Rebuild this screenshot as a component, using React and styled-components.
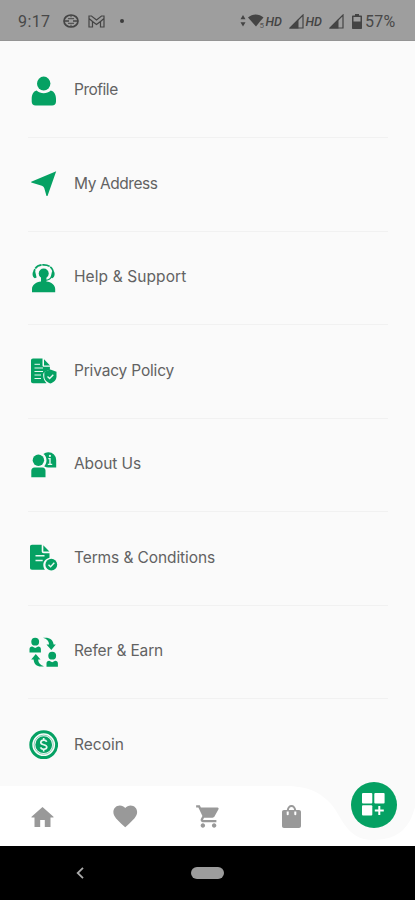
import styled, { createGlobalStyle } from "styled-components";
import { MdFavorite, MdShoppingCart } from "react-icons/md";

const GlobalStyle = createGlobalStyle`
    * {
        box-sizing: border-box;
    }

    body {
        margin: 0;
        background-color: #fafafa;
        font-family: Inter, "Liberation Sans", sans-serif;
    }
`;

const ProfileIcon = () => (
    <MenuIcon viewBox="0 0 30 30">
        <ellipse cx="15.7" cy="7.6" rx="6.7" ry="7" />
        <path d="M8.6 14.5c4 3.6 10.2 3.6 14.2 0 3.4.8 5.2 4.2 5.2 8.5v2.500c0 2.700-1.500 4-4 4H7.700c-2.500 0-4-1.300-4-4V23c0-4.300 1.500-7.700 4.900-8.500Z" />
    </MenuIcon>
);

const AddressIcon = () => (
    <MenuIcon viewBox="0 0 30 30">
        <path d="M28.2 2.200 19.500 27h-1l-2.200-7.800c-.3-1.200-1.200-2.100-2.400-2.500L3.200 13.600v-.9Z" />
    </MenuIcon>
);

const SupportIcon = () => (
    <MenuIcon viewBox="0 0 30 30">
        <path className="line" d="M6.800 13.500C4.200 6.600 8.700 1.800 15.600 1.800s11.400 4.800 8.800 11.700" strokeWidth="1.700" strokeDasharray="7.500 .7" />
        <circle cx="15.700" cy="10.500" r="5" />
        <path className="line" d="M23.500 13.500c-.8 2.300-3 3.600-6.500 3.900" strokeWidth="1.100" />
        <path d="M5.200 8.500h2l1.400 6-1.700.8c-2.500-1.300-2.900-4.700-1.700-6.800ZM26 8.500h-2l-1.400 6 1.700.8c2.500-1.300 2.900-4.700 1.700-6.800Z" />
        <path d="M13 14h5.400v4.500c5 .6 8.800 3.300 8.800 7.500v3.200H4V26c0-4.200 4-6.900 9-7.500Z" />
    </MenuIcon>
);

const PrivacyIcon = () => (
    <MenuIcon viewBox="0 0 30 30">
        <path d="M5 2.500h9.500v6.700c0 1 .6 1.600 1.600 1.600h5.800v3.300c-4 1.100-6.700 1.500-6.700 5.500 0 3.400 1.300 5.700 3.300 7.600H5c-1.200 0-2-.8-2-2V4.500c0-1.200.8-2 2-2Z" />
        <path d="M16 3.200 22 9.400h-6Z" />
        <path className="cut" d="M6.500 8.300H12M6.500 12H15M6.500 15.500H15M6.500 19H13M6.500 22.500h6.500" strokeWidth="1" />
        <path d="m22.400 13.600 6.100 2.200v4.500c0 3.600-2.300 5.900-6.100 7.300-3.800-1.400-6.100-3.700-6.100-7.300v-4.500Z" />
        <path className="cut" d="m19.500 20.500 2.100 2 3.700-3.700" strokeWidth="1.400" />
    </MenuIcon>
);

const AboutIcon = () => (
    <MenuIcon viewBox="0 0 30 30">
        <path d="M20.500 2.300a7.700 7.700 0 0 1 7.700 7.700v7.600h-7.700a7.600 7.600 0 0 1-4.300-1.300c1.500-1.600 2.300-3.500 2.300-6 0-2.900-1.300-5-3.100-6.300a7.500 7.500 0 0 1 5.100-1.700Z" />
        <circle cx="10.400" cy="10.200" r="5.700" />
        <path d="M6.500 17.500h7.900c2 0 3.100 1.300 3.100 3.300v6.500H3.300v-6.500c0-2 1.200-3.300 3.200-3.300Z" />
        <circle className="paper" cx="21.900" cy="5.900" r="1.100" />
        <path className="cut" d="M20.300 8.600H22v5.600M19.800 14.400h4.400" strokeWidth="1.400" />
    </MenuIcon>
);

const TermsIcon = () => (
    <MenuIcon viewBox="0 0 30 30">
        <path d="M4 1.800h9.700v6.500c0 1.200.8 2 2 2h5.800v4.500c-3.500.8-6.200 3.500-6.200 7.300 0 1.800.6 3.400 1.600 4.700H4c-1.300 0-2-.8-2-2v-21c0-1.200.7-2 2-2Z" />
        <path d="M15.300 2.300 21.400 8.600h-6.100Z" />
        <path className="cut" d="M7.500 12.800h9M7.500 17.600h7.200" strokeWidth="1.500" />
        <circle cx="23.300" cy="21.700" r="5.900" />
        <path className="cut" d="m20.500 21.700 2.100 2.100 3.700-4" strokeWidth="1.400" />
    </MenuIcon>
);

const ReferIcon = () => (
    <MenuIcon viewBox="0 0 30 30">
        <circle cx="7.200" cy="4.700" r="3.900" />
        <path d="M1.500 15.400v-3.200c0-1.700 1-2.700 2.700-2.700l3 1.500 3-1.500c1.700 0 2.700 1 2.700 2.700v3.200Z" />
        <circle cx="24.200" cy="18.700" r="3.900" />
        <path d="M18.500 29.700v-3.200c0-1.700 1-2.700 2.700-2.700l3 1.500 3-1.500c1.700 0 2.700 1 2.700 2.700v3.200Z" />
        <path d="M15 .8c6.300-.8 10.200 1.600 10.600 6.700h2.200l-4.500 5.500-4.800-5.500h2.600C20.800 4 19 1.900 15 .8Z" />
        <path d="M16 29.200c-6.200 1.200-10-1.300-10.400-6.700H3.200l4.600-5.600 4.700 5.600h-2.400c.3 3.600 2.200 5.600 5.900 6.700Z" />
    </MenuIcon>
);

const CoinIcon = () => (
    <MenuIcon viewBox="0 0 30 30">
        <circle className="line" cx="15.700" cy="14.700" r="12.900" strokeWidth="3" />
        <circle className="line" cx="15.700" cy="14.700" r="9.600" strokeWidth="1" opacity=".45" />
        <circle cx="15.700" cy="14.700" r="8.400" />
        <path className="cut" d="M18.700 11.900c-.5-1.200-1.500-1.700-3-1.700-1.700 0-2.900.8-2.900 2.200 0 3.100 6 1.500 6 4.700 0 1.400-1.200 2.200-3.100 2.200-1.600 0-2.700-.6-3.200-1.900M15.700 7.900v2.300m0 9.100v2.200" strokeWidth="1.700" />
    </MenuIcon>
);

const Signal = () => (
    <svg width="15" height="15" viewBox="0 0 15 15">
        <path d="M1 14 14 1v13Z" fill="none" stroke="#444" strokeWidth="1.200" />
        <path d="M.5 14.500 9.500 5v9.500Z" fill="#444" />
    </svg>
);

const items = [
    { label: "Profile", icon: ProfileIcon, spacing: -0.48 },
    { label: "My Address", icon: AddressIcon, spacing: -0.42 },
    { label: "Help & Support", icon: SupportIcon, spacing: 0.1 },
    { label: "Privacy Policy", icon: PrivacyIcon, spacing: -0.18 },
    { label: "About Us", icon: AboutIcon, spacing: -0.08 },
    { label: "Terms & Conditions", icon: TermsIcon, spacing: -0.1 },
    { label: "Refer & Earn", icon: ReferIcon, spacing: -0.15 },
    { label: "Recoin", icon: CoinIcon, spacing: 0.02 },
];

const App = () => {
    return (
        <>
            <GlobalStyle />
            <Screen>
                <StatusBar>
                    <StatusGroup>
                        <StatusText $width={32} $spacing={0.4}>9:17</StatusText>
                        <StatusSlot $left={13}>
                            <svg width="16" height="14" viewBox="0 0 16 14" fill="none" stroke="#444">
                                <ellipse cx="8" cy="7" rx="7" ry="6" strokeWidth="1.700" />
                                <path d="M1.500 7H6M10 7h4.500" strokeWidth="1.600" />
                                <path d="M8 1v2.300M8 10.700V13M5 4.700h6M5 9.300h6" strokeWidth="1" />
                            </svg>
                        </StatusSlot>
                        <StatusSlot $left={9}>
                            <svg width="17" height="13" viewBox="0 0 17 13" fill="none" stroke="#444" strokeWidth="1.200">
                                <path d="M1 1h2.500l5 4 5-4H16v11h-3.500V6.500l-4 3-4-3V12H1ZM4.500 6.500 1 3.500M12.500 6.500l3.500-3" />
                            </svg>
                        </StatusSlot>
                        <StatusSlot $left={14.5}>
                            <StatusDot />
                        </StatusSlot>
                    </StatusGroup>
                    <StatusGroup>
                        <svg width="6" height="12" viewBox="0 0 6 12" fill="#444">
                            <path d="m3 0 2.500 4.300h-5ZM3 11.500.5 7.200h5Z" />
                        </svg>
                        <StatusSlot $left={2}>
                            <svg width="18" height="14" viewBox="0 0 18 14">
                                <path d="M0 3.500C4.500-.5 11-.5 15.500 3.500L12 7.500 8 12.500Z" fill="#444" />
                                <text x="11.500" y="13.500" fontSize="8" fill="#555" fontFamily="Roboto, sans-serif">5</text>
                            </svg>
                        </StatusSlot>
                        <HdText>HD</HdText>
                        <StatusSlot $left={5}><Signal /></StatusSlot>
                        <StatusSlot $left={2}><HdText>HD</HdText></StatusSlot>
                        <StatusSlot $left={5}><Signal /></StatusSlot>
                        <StatusSlot $left={8}>
                            <svg width="10" height="15" viewBox="0 0 10 15">
                                <path d="M3 0h4v1.500h2c.6 0 1 .4 1 1V14c0 .6-.4 1-1 1H1c-.6 0-1-.4-1-1V2.500c0-.6.4-1 1-1h2ZM1.500 3v4.500h7V3Z" fill="#444" fillRule="evenodd" />
                            </svg>
                        </StatusSlot>
                        <StatusSlot $left={3.5}>
                            <StatusText $width={31} $spacing={0.2}>57%</StatusText>
                        </StatusSlot>
                    </StatusGroup>
                </StatusBar>

                <Menu>
                    {items.map(({ label, icon: Icon, spacing }) => (
                        <MenuItem key={label}>
                            <Icon />
                            <MenuLabel $spacing={spacing}>{label}</MenuLabel>
                        </MenuItem>
                    ))}
                </Menu>

                <TabBar>
                    <TabShape viewBox="0 0 415 60">
                        <path d="M0 0H285C308 0 320 6 331 18S346 54 373 54 410 40 415 21V60H0Z" fill="#fff" />
                    </TabShape>
                    <Tab>
                        <svg width="23" height="20" viewBox="0 0 23 20">
                            <path d="m11.500 0 11 9.800v.8h-3V20h-5.700v-7H9.200v7H3.500v-9.400h-3v-.8Z" />
                        </svg>
                    </Tab>
                    <Tab>
                        <MdFavorite size={28.5} />
                    </Tab>
                    <Tab>
                        <MdShoppingCart size={27} />
                    </Tab>
                    <Tab>
                        <svg width="19" height="23" viewBox="0 0 19 23">
                            <path d="M2 5h2.800C5.300 2 7 0 9.500 0s4.200 2 4.700 5H17c1.200 0 2 .8 2 2v14c0 1.200-.8 2-2 2H2c-1.200 0-2-.8-2-2V7c0-1.200.8-2 2-2Zm4.800 0h5.400C11.800 3 11 1.900 9.500 1.900S7.200 3 6.800 5ZM4.700 6.500v2.800a1 1 0 0 0 2 0V6.500Zm7.600 0v2.800a1 1 0 0 0 2 0V6.500Z" fillRule="evenodd" />
                        </svg>
                    </Tab>
                    <Tab $top>
                        <AddButton aria-label="Categories">
                            <svg width="23" height="23" viewBox="0 0 23 23" fill="#fff">
                                <rect x="0" y="0" width="10.300" height="10.500" rx="1" />
                                <rect x="12.300" y="0" width="10.300" height="10.500" rx="1" />
                                <rect x="0" y="12.300" width="10.300" height="10.200" rx="1" />
                                <path d="M16.300 13h2v3.500h3.500v2h-3.500V22h-2v-3.500h-3.500v-2h3.500Z" />
                            </svg>
                        </AddButton>
                    </Tab>
                </TabBar>

                <SystemNav>
                    <BackSlot>
                        <svg width="8" height="12" viewBox="0 0 8 12" fill="none" stroke="#aaa" strokeWidth="1.800">
                            <path d="M7 .8 1.700 6 7 11.200" />
                        </svg>
                    </BackSlot>
                    <HomePill />
                    <span />
                </SystemNav>
            </Screen>
        </>
    )
}

const Screen = styled.div`
    width: 415px;
    height: 900px;
    display: flex;
    flex-direction: column;
    overflow: hidden;
`;

const StatusBar = styled.header`
    height: 41px;
    flex-shrink: 0;
    display: flex;
    justify-content: space-between;
    align-items: center;
    padding: 2px 19px 0 18px;
    background-color: #9e9e9e;
    border-bottom: 1px solid #949494;
`;

const StatusGroup = styled.div`
    display: flex;
    align-items: center;
`;

const StatusSlot = styled.div`
    display: flex;
    align-items: center;
    margin-left: ${props => props.$left}px;
`;

const StatusText = styled.span`
    width: ${props => props.$width}px;
    padding-top: 1px;
    font-family: Roboto, sans-serif;
    font-size: 16px;
    line-height: 20px;
    letter-spacing: ${props => props.$spacing}px;
    white-space: nowrap;
    color: #484848;
`;

const HdText = styled.span`
    width: 18px;
    font-family: Roboto, sans-serif;
    font-size: 12.5px;
    font-style: italic;
    font-weight: 500;
    color: #444;
`;

const StatusDot = styled.span`
    width: 4px;
    height: 4px;
    border-radius: 50%;
    background-color: #3c3c3c;
`;

const Menu = styled.ul`
    flex: 1;
    min-height: 0;
    margin: 0;
    padding: 3.5px 27px 0 28px;
    list-style: none;
    overflow: hidden;
`;

const MenuItem = styled.li`
    height: 93.5px;
    display: flex;
    align-items: center;
    gap: 16px;
    border-bottom: 1px solid #f1f1f1;

    &:last-child {
        border-bottom-color: transparent;
    }
`;

const MenuIcon = styled.svg`
    width: 30px;
    height: 30px;
    flex-shrink: 0;
    fill: #05a163;

    & .line {
        fill: none;
        stroke: #05a163;
    }

    & .cut {
        fill: none;
        stroke: #e9f8f1;
    }

    & .paper {
        fill: #e9f8f1;
    }
`;

const MenuLabel = styled.span`
    font-size: 15.5px;
    line-height: 20px;
    letter-spacing: ${props => props.$spacing}px;
    color: #626262;
    white-space: nowrap;
    margin-bottom: 1px;
`;

const TabBar = styled.nav`
    height: 60px;
    flex-shrink: 0;
    display: grid;
    grid-template-columns: repeat(5, 1fr);
    position: relative;
    border-bottom: 1px solid #777;
`;

const TabShape = styled.svg`
    width: 100%;
    height: 60px;
    position: absolute;
    top: 0;
    left: 0;
`;

const Tab = styled.div`
    display: flex;
    justify-content: center;
    align-items: ${props => props.$top ? "flex-start" : "center"};
    padding: ${props => props.$top ? "0" : "2px 0 0 1px"};
    position: relative;
    color: #999;
    fill: #999;
`;

const AddButton = styled.button`
    width: 46px;
    height: 46px;
    margin-top: -4.5px;
    padding: 0;
    display: flex;
    justify-content: center;
    align-items: center;
    border: none;
    border-radius: 50%;
    background-color: #05a163;
`;

const SystemNav = styled.footer`
    height: 54px;
    flex-shrink: 0;
    display: grid;
    grid-template-columns: 1fr 33px 1fr;
    align-items: center;
    background-color: #000;
`;

const BackSlot = styled.div`
    display: flex;
    padding-left: 76px;
`;

const HomePill = styled.div`
    height: 12px;
    border-radius: 6px;
    background-color: #9c9c9c;
`;

export default App;
